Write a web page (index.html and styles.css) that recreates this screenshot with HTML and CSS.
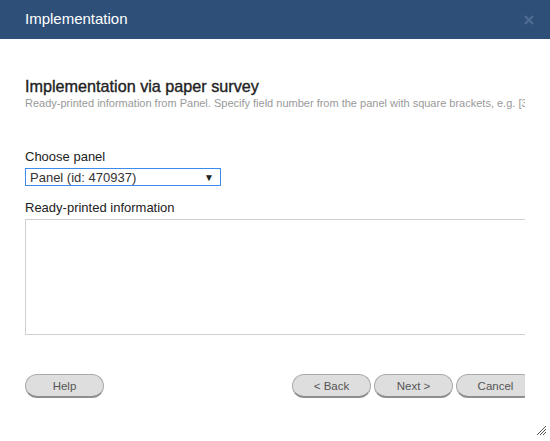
FILE: index.html
```html
<!DOCTYPE html>
<html>
<head>
<meta charset="utf-8">
<link rel="stylesheet" href="styles.css">
</head>
<body>
<div class="dialog">
  <div class="titlebar">
    <span class="title">Implementation</span>
    <svg class="close" width="10" height="10" viewBox="0 0 10 10"><path d="M1 1 L9 9 M9 1 L1 9" stroke="#4f6c93" stroke-width="2.2"/></svg>
  </div>
  <div class="content">
    <div class="inner">
      <h1 class="heading">Implementation via paper survey</h1>
      <p class="subtitle">Ready-printed information from Panel. Specify field number from the panel with square brackets, e.g. [3]</p>
      <label class="label first">Choose panel</label>
      <div class="select"><span>Panel (id: 470937)</span><span class="arrow">&#x25BC;</span></div>
      <label class="label second">Ready-printed information</label>
      <div class="textarea"></div>
      <div class="buttons">
        <button class="btn help">Help</button>
        <div class="right">
          <button class="btn">&lt; Back</button>
          <button class="btn">Next &gt;</button>
          <button class="btn">Cancel</button>
        </div>
      </div>
    </div>
  </div>
  <svg class="grip" width="11" height="11" viewBox="0 0 11 11"><path d="M10 1 L1 10 M10 4 L4 10 M10 7 L7 10" stroke="#555" stroke-width="1"/></svg>
</div>
</body>
</html>
```

FILE: styles.css
```css
html, body {
  margin: 0;
  padding: 0;
  background: #fff;
  font-family: "Liberation Sans", Arial, sans-serif;
}
.dialog {
  width: 550px;
  height: 441px;
  position: relative;
  overflow: hidden;
}
.titlebar {
  height: 39px;
  background: #2e5078;
  display: flex;
  align-items: center;
  justify-content: space-between;
  padding: 0 16px 0 25px;
  box-sizing: border-box;
}
.title {
  color: #fff;
  font-size: 15px;
  margin-top: -2px;
}
.close {
  margin-top: 1px;
}
.content {
  padding-left: 25px;
  width: 500px;
  overflow: hidden;
}
.inner {
  width: 520px;
}
.heading {
  margin: 38px 0 0;
  font-size: 16.2px;
  font-weight: normal;
  color: #222;
  -webkit-text-stroke: 0.35px #222;
  line-height: 19px;
}
.subtitle {
  margin: 1px 0 0;
  font-size: 11px;
  color: #999;
  white-space: nowrap;
  line-height: 12px;
}
.label {
  display: block;
  font-size: 13px;
  color: #222;
  line-height: 15px;
}
.label.first { margin-top: 40px; }
.label.second { margin-top: 14px; }
.select {
  margin-top: 4px;
  width: 196px;
  height: 18px;
  box-sizing: border-box;
  border: 1px solid #3b8ced;
  display: flex;
  align-items: center;
  justify-content: space-between;
  padding: 0 6px 0 4px;
  font-size: 13px;
  color: #333;
}
.arrow {
  font-size: 10px;
  color: #222;
}
.textarea {
  margin-top: 4px;
  width: 500px;
  height: 116px;
  box-sizing: border-box;
  border: 1px solid #d0d0d0;
  border-right: none;
}
.buttons {
  margin-top: 39px;
  display: flex;
  justify-content: space-between;
  width: 510px;
}
.right {
  display: flex;
  gap: 3px;
}
.btn {
  width: 79px;
  height: 24px;
  border-radius: 12px;
  border: 1px solid #aaa;
  border-bottom: 2px solid #8e8e8e;
  background: #dedede;
  color: #555;
  font-family: "Liberation Sans", Arial, sans-serif;
  font-size: 11.5px;
  padding: 0;
  box-sizing: border-box;
}
.grip {
  position: absolute;
  right: 3px;
  bottom: 5px;
}
```
